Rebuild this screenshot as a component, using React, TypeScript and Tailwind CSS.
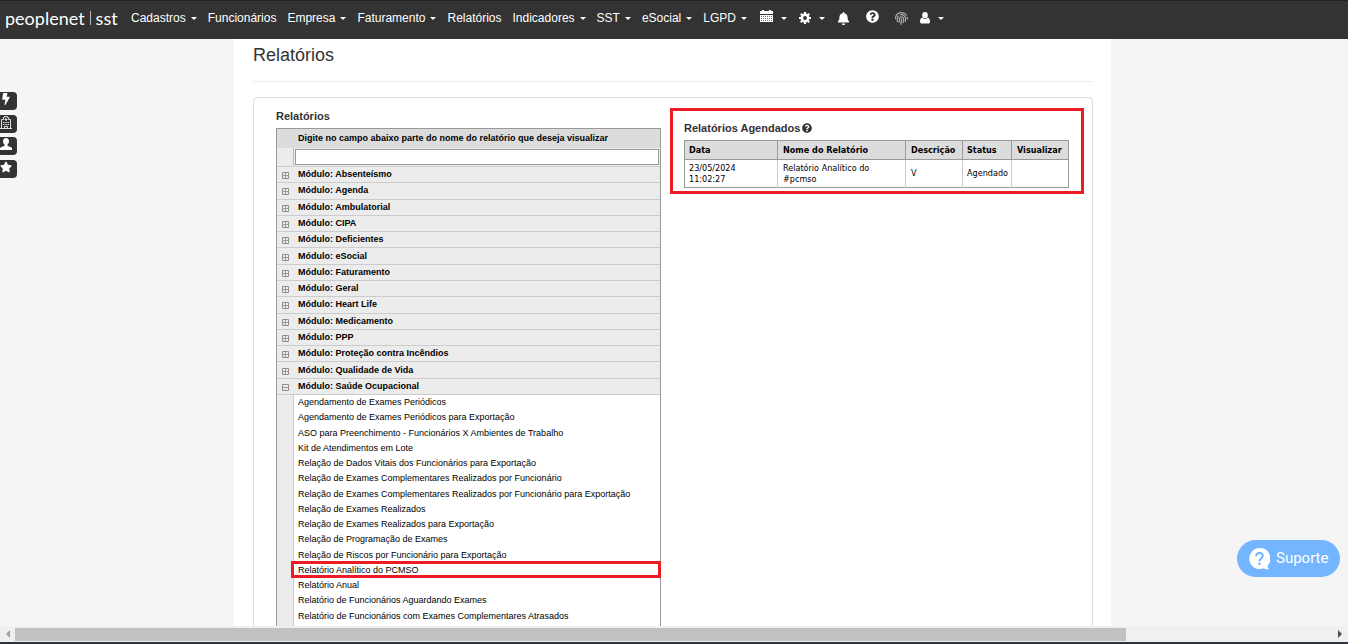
import { useState } from "react";
import type { ReactNode } from "react";
import { FaBell, FaBolt, FaFingerprint, FaQuestionCircle, FaStar } from "react-icons/fa";

const navItems: { label: string; menu: boolean }[] = [
  { label: "Cadastros", menu: true },
  { label: "Funcionários", menu: false },
  { label: "Empresa", menu: true },
  { label: "Faturamento", menu: true },
  { label: "Relatórios", menu: false },
  { label: "Indicadores", menu: true },
  { label: "SST", menu: true },
  { label: "eSocial", menu: true },
  { label: "LGPD", menu: true },
];

const modules = [
  "Absenteísmo",
  "Agenda",
  "Ambulatorial",
  "CIPA",
  "Deficientes",
  "eSocial",
  "Faturamento",
  "Geral",
  "Heart Life",
  "Medicamento",
  "PPP",
  "Proteção contra Incêndios",
  "Qualidade de Vida",
  "Saúde Ocupacional",
];

const reports = [
  "Agendamento de Exames Periódicos",
  "Agendamento de Exames Periódicos para Exportação",
  "ASO para Preenchimento - Funcionários X Ambientes de Trabalho",
  "Kit de Atendimentos em Lote",
  "Relação de Dados Vitais dos Funcionários para Exportação",
  "Relação de Exames Complementares Realizados por Funcionário",
  "Relação de Exames Complementares Realizados por Funcionário para Exportação",
  "Relação de Exames Realizados",
  "Relação de Exames Realizados para Exportação",
  "Relação de Programação de Exames",
  "Relação de Riscos por Funcionário para Exportação",
  "Relatório Analítico do PCMSO",
  "Relatório Anual",
  "Relatório de Funcionários Aguardando Exames",
  "Relatório de Funcionários com Exames Complementares Atrasados",
];

const highlighted = "Relatório Analítico do PCMSO";
const reportsModule = "Saúde Ocupacional";

function Caret() {
  return (
    <svg viewBox="0 0 6 3" className="h-[3px] w-[6px] shrink-0" fill="currentColor" aria-hidden="true">
      <path d="M0 0h6L3 3z" />
    </svg>
  );
}

function CalendarIcon() {
  return (
    <svg viewBox="0 0 13 13" className="mb-[3px] h-[13px] w-[13px]" aria-hidden="true">
      <path fill="#fff" d="M0 1h2V0h2v1h5V0h2v1h2v3H0z" />
      <path fill="#fff" d="M0 5h13v7H0z" />
      <path stroke="#77778c" strokeWidth="1" strokeDasharray="1 1" d="M1 6.500h11M1 8.500h11M1 10.500h11" />
    </svg>
  );
}

function GearIcon() {
  return (
    <svg viewBox="0 0 12 12" className="h-3 w-3" fill="none" stroke="#fff" aria-hidden="true">
      <circle cx="6" cy="6" r="3.200" strokeWidth="2.600" />
      <path
        strokeWidth="2.200"
        d="M6 0v2M6 10v2M0 6h2M10 6h2M1.800 1.800l1.400 1.400M8.800 8.800l1.400 1.400M10.200 1.800L8.800 3.200M3.200 8.800l-1.400 1.400"
      />
    </svg>
  );
}

function UserIcon() {
  return (
    <svg viewBox="0 0 10 12" className="h-3 w-[10px]" fill="currentColor" aria-hidden="true">
      <ellipse cx="5" cy="3.300" rx="2.800" ry="3.200" />
      <path d="M2.300 5.600C.7 6 0 7.800 0 9.800 0 11 .8 11.600 1.800 11.600h6.400c1 0 1.800-.6 1.800-1.800 0-2-.7-3.800-2.300-4.200C7 6.600 6 7.100 5 7.100s-2-.5-2.700-1.500z" />
    </svg>
  );
}

function HospitalIcon() {
  return (
    <svg viewBox="0 0 12 13" className="h-[13px] w-[12px]" fill="none" stroke="#ddd" aria-hidden="true">
      <path d="M1.500 12.500v-9h2v-2h1v-1h3v1h1v2h2v9" />
      <path d="M6 2v3M4.500 3.500h3M0 12.500h12" />
      <path d="M3 6.500h1.500M5.300 6.500h1.500M7.500 6.500H9M3 8.500h1.500M5.300 8.500h1.500M7.500 8.500H9M4.500 12.500v-2h3v2" />
    </svg>
  );
}

function PersonIcon() {
  return (
    <svg viewBox="0 0 12 12" className="h-[12px] w-[12px]" fill="currentColor" aria-hidden="true">
      <path d="M6 0C4 0 3 1.400 3 3.200c0 1.500.7 2.600 1.500 3.300v1.200L1 9.200c-.7.300-1 .8-1 1.500V12h12v-1.300c0-.7-.3-1.200-1-1.500L7.500 7.700V6.500C8.300 5.800 9 4.700 9 3.200 9 1.400 8 0 6 0z" />
    </svg>
  );
}

function TreeIcon({ open }: { open: boolean }) {
  return (
    <svg viewBox="0 0 7 7" className="h-[7px] w-[7px]" fill="none" aria-hidden="true">
      <path stroke="#8e8e8e" d="M.5.5h6v6h-6z" />
      <path stroke="#9a9a9a" d={open ? "M1 3.500h5" : "M1 3.500h5M3.500 1v5"} />
    </svg>
  );
}

function Brand() {
  return (
    <a
      href="#inicio"
      className="flex w-[126px] shrink-0 items-center gap-[5px] pl-[5px] font-[family-name:Lato,sans-serif] text-[18px] leading-6 text-white"
    >
      <span>peoplenet</span>
      <span className="h-[14px] w-px bg-[#bbb]" />
      <span>sst</span>
    </a>
  );
}

function IconButton({ label, menu, children }: { label: string; menu?: boolean; children: ReactNode }) {
  return (
    <button type="button" aria-label={label} className="flex items-center gap-2">
      {children}
      {menu && <Caret />}
    </button>
  );
}

function SideTab({ label, children }: { label: string; children: ReactNode }) {
  return (
    <button
      type="button"
      aria-label={label}
      className="flex h-[18px] w-[17px] items-start rounded-r-[4px] bg-[#333] pt-px text-white"
    >
      {children}
    </button>
  );
}

export default function App() {
  const [selected, setSelected] = useState(reportsModule);

  return (
    <div className="relative flex h-screen flex-col overflow-hidden bg-[#f5f5f5] font-['Liberation_Sans',Arial,sans-serif] text-[#333]">
      <header className="flex h-[39px] shrink-0 items-center border-t border-[#222] bg-[#333] pb-1 text-white">
        <Brand />
        <nav className="flex items-center gap-[11px] pl-[5px] text-[12px] leading-4">
          {navItems.map((item) =>
            item.menu ? (
              <button key={item.label} type="button" className="flex items-center gap-[5px]">
                {item.label}
                <Caret />
              </button>
            ) : (
              <a key={item.label} href="#pagina">
                {item.label}
              </a>
            ),
          )}
        </nav>
        <div className="flex items-center gap-3 pl-[13px]">
          <IconButton label="Calendário" menu>
            <CalendarIcon />
          </IconButton>
          <IconButton label="Configurações" menu>
            <GearIcon />
          </IconButton>
          <div className="flex items-center gap-4">
            <IconButton label="Notificações">
              <FaBell size={13} />
            </IconButton>
            <IconButton label="Ajuda">
              <FaQuestionCircle size={13} className="mb-[3px]" />
            </IconButton>
            <IconButton label="Biometria">
              <FaFingerprint size={13} color="#aaa" />
            </IconButton>
          </div>
          <IconButton label="Usuário" menu>
            <UserIcon />
          </IconButton>
        </div>
      </header>

      <main className="flex min-h-0 flex-1 justify-center overflow-hidden pr-[3px]">
        <div className="h-max w-full max-w-[877px] bg-white pr-[18px] pb-6 pl-[19px]">
          <h1 className="border-b border-[#eee] pt-[6px] pb-[15px] text-[18px] leading-[21px]">Relatórios</h1>
          <div className="mt-[15px] flex items-start rounded-[4px] border border-[#ddd] pt-[10px] pr-2 pb-6 pl-[22px]">
            <section className="min-w-0 flex-1">
              <h2 className="pt-px pb-[5px] text-[11px] leading-[14px] font-bold">Relatórios</h2>
              <div className="border border-[#999] bg-[#ececec] text-[9px] text-black">
                <label htmlFor="filtro" className="block bg-[#dcdcdc] pl-[21px] leading-[19px] font-bold">
                  Digite no campo abaixo parte do nome do relatório que deseja visualizar
                </label>
                <div className="flex h-[19px] border-b border-[#ccc]">
                  <div className="w-[17px] border-r border-[#bbb]" />
                  <input
                    id="filtro"
                    type="text"
                    className="m-px h-4 min-w-0 flex-1 border border-[#999] bg-white px-1 text-[9px] outline-none"
                  />
                </div>
                <div className="grid min-h-[228px] auto-rows-fr">
                  {modules.map((name) => (
                    <button
                      key={name}
                      type="button"
                      aria-expanded={selected === name}
                      onClick={() => setSelected(selected === name ? "" : name)}
                      className="flex w-full items-center border-b border-[#ccc] text-left leading-[15px] font-bold"
                    >
                      <span className="flex w-[21px] pt-[2px] pl-[5px]">
                        <TreeIcon open={selected === name} />
                      </span>
                      Módulo: {name}
                    </button>
                  ))}
                </div>
                {selected === reportsModule && (
                  <div className="ml-4 border-l border-[#ccc] bg-white pb-4">
                    <ul className="grid min-h-[229px] auto-rows-fr">
                      {reports.map((r) => (
                        <li key={r} className="relative pl-1 leading-[14px]">
                          <a href="#relatorio">{r}</a>
                          {r === highlighted && (
                            <span className="pointer-events-none absolute -top-[2px] -right-px bottom-0 -left-[3px] border-[3px] border-[#ed1c24]" />
                          )}
                        </li>
                      ))}
                    </ul>
                  </div>
                )}
              </div>
            </section>

            <section className="ml-[9px] w-[414px] border-[3px] border-[#ed1c24] pt-[10px] pr-3 pb-[3px] pl-[11px]">
              <h2 className="flex items-center gap-[2px] pb-[5px] text-[11px] leading-[14px] font-bold">
                Relatórios Agendados <FaQuestionCircle size={10} />
              </h2>
              <table className="w-full border-collapse border border-[#999] text-left font-['DejaVu_Sans_Condensed',sans-serif] text-[9px] leading-[11px] text-black">
                <thead>
                  <tr className="h-[19px] bg-[#dcdcdc]">
                    <th className="w-[93px] border border-[#999] pl-1">Data</th>
                    <th className="w-[128px] border border-[#999] pl-[5px]">Nome do Relatório</th>
                    <th className="w-[57px] border border-[#999] pl-[5px]">Descrição</th>
                    <th className="w-[49px] border border-[#999] pl-1">Status</th>
                    <th className="border border-[#999] pl-[5px]">Visualizar</th>
                  </tr>
                </thead>
                <tbody>
                  <tr className="h-7">
                    <td className="border-r border-[#ccc] pl-1">
                      23/05/2024
                      <br />
                      11:02:27
                    </td>
                    <td className="border-r border-[#ccc] pl-[5px]">
                      Relatório Analítico do
                      <br />
                      #pcmso
                    </td>
                    <td className="border-r border-[#ccc] pl-[5px]">V</td>
                    <td className="border-r border-[#ccc] pl-1">Agendado</td>
                    <td />
                  </tr>
                </tbody>
              </table>
            </section>
          </div>
        </div>
      </main>

      <div className="flex h-[18px] shrink-0 items-center border-b-2 border-[#30343c] bg-[#f0f0f0]">
        <span className="flex w-[15px] shrink-0 justify-center">
          <svg viewBox="0 0 4 8" className="h-2 w-1" fill="#a3a3a3" aria-hidden="true">
            <path d="M4 0v8L0 4z" />
          </svg>
        </span>
        <span className="h-[13px] flex-27 bg-[#c1c1c1]" />
        <span className="flex-5" />
        <span className="flex w-4 shrink-0 justify-center">
          <svg viewBox="0 0 4 8" className="h-2 w-1" fill="#505050" aria-hidden="true">
            <path d="M0 0v8l4-4z" />
          </svg>
        </span>
      </div>

      <aside className="absolute top-[92px] left-0 flex h-[86px] flex-col justify-between">
        <SideTab label="Atalhos">
          <FaBolt size={12} />
        </SideTab>
        <SideTab label="Empresa">
          <HospitalIcon />
        </SideTab>
        <SideTab label="Funcionário">
          <PersonIcon />
        </SideTab>
        <SideTab label="Favoritos">
          <FaStar size={12} />
        </SideTab>
      </aside>

      <button
        type="button"
        className="absolute right-2 bottom-[67px] flex h-[37px] w-[103px] items-center gap-[6px] rounded-full bg-[#74b5ff] pl-3 font-[family-name:Roboto,sans-serif] text-[15px] text-white"
      >
        <svg viewBox="0 0 21 22" className="h-[22px] w-[21px]" aria-hidden="true">
          <path
            fill="#fff"
            d="M10.500 0a10.500 10.500 0 1 0 4 20.300c1.600.9 3.500 1.200 5.500.6-1-.6-1.500-1.700-1.500-3.100A10.500 10.500 0 0 0 10.500 0z"
          />
          <path fill="none" stroke="#74b5ff" strokeWidth="2" d="M7.200 8.300c0-2.100 1.400-3.300 3.300-3.300s3.300 1.200 3.300 3c0 2.300-3.300 2.500-3.300 5.200" />
          <circle cx="10.500" cy="15.800" r="1.300" fill="#74b5ff" />
        </svg>
        Suporte
      </button>
    </div>
  );
}
